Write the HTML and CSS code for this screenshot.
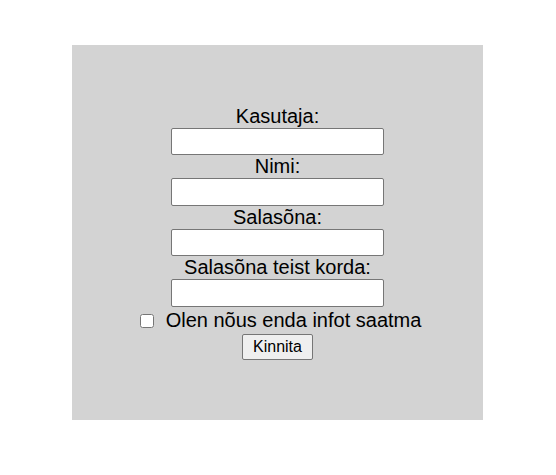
FILE: index.html
```html
<!DOCTYPE html>
<html lang="et">
<head>
<meta charset="utf-8">
<title>Registreerimine</title>
<link rel="stylesheet" href="styles.css">
</head>
<body>
<div class="panel">
  <form class="form">
    <label class="label" for="kasutaja">Kasutaja:</label>
    <input class="field" type="text" id="kasutaja">
    <label class="label" for="nimi">Nimi:</label>
    <input class="field" type="text" id="nimi">
    <label class="label" for="parool">Salasõna:</label>
    <input class="field" type="password" id="parool">
    <label class="label" for="parool2">Salasõna teist korda:</label>
    <input class="field" type="password" id="parool2">
    <div class="consent">
      <input class="check" type="checkbox" id="nous">
      <label class="consent-text" for="nous">Olen nõus enda infot saatma</label>
    </div>
    <button class="submit" type="button">Kinnita</button>
  </form>
</div>
</body>
</html>
```
FILE: styles.css
```css
html, body {
  margin: 0;
  padding: 0;
  background: #ffffff;
}
body {
  font-family: "Liberation Sans", Arial, sans-serif;
  color: #000;
}
.panel {
  width: 411px;
  height: 375px;
  margin: 45px 0 0 72px;
  background: #d3d3d3;
  display: flex;
  flex-direction: column;
  justify-content: center;
  align-items: center;
}
.form {
  display: flex;
  flex-direction: column;
  align-items: center;
}
.label {
  font-size: 20px;
  line-height: 23px;
  height: 23px;
}
.field {
  box-sizing: border-box;
  width: 213px;
  height: 27.5px;
  margin: 0;
  padding: 1px 2px;
  border: 1px solid #767676;
  border-radius: 2px;
  background: #fff;
  font-size: 13px;
}
.consent {
  display: flex;
  align-items: center;
  height: 26px;
  margin-top: 0.5px;
  gap: 12px;
  padding-left: 6px;
}
.check {
  width: 14px;
  height: 14px;
  margin: 0;
  position: relative;
  top: 1px;
}
.consent-text {
  font-size: 20px;
  line-height: 23px;
}
.submit {
  box-sizing: border-box;
  height: 26px;
  width: 71px;
  margin-top: 1px;
  padding: 0;
  border: 1px solid #767676;
  border-radius: 2px;
  background: #efefef;
  font-family: "Liberation Sans", Arial, sans-serif;
  font-size: 16px;
  color: #000;
}
```
